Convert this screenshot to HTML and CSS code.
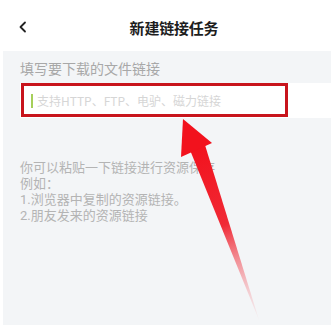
FILE: index.html
```html
<!DOCTYPE html>
<html lang="zh">
<head>
<meta charset="utf-8">
<link rel="stylesheet" href="styles.css">
</head>
<body>
<div class="page">
  <header class="topbar">
    <span class="back">
      <svg width="9" height="12" viewBox="0 0 9 12"><path d="M7 1.5 L2.5 6 L7 10.5" fill="none" stroke="#222" stroke-width="1.8" stroke-linecap="round" stroke-linejoin="round"/></svg>
    </span>
    <h1 class="title">新建链接任务</h1>
  </header>
  <main class="content">
    <div class="label">填写要下载的文件链接</div>
    <div class="field">
      <span class="cursor"></span>
      <span class="placeholder">支持HTTP、FTP、电驴、磁力链接</span>
      <div class="highlight"></div>
    </div>
    <div class="help">
      <p>你可以粘贴一下链接进行资源保存</p>
      <p>例如：</p>
      <p>1.浏览器中复制的资源链接。</p>
      <p>2.朋友发来的资源链接</p>
    </div>
  </main>
  <svg class="arrow" width="331" height="325" viewBox="0 0 331 325">
    <defs>
      <linearGradient id="fade" x1="196" y1="148" x2="258" y2="320" gradientUnits="userSpaceOnUse">
        <stop offset="0" stop-color="#f2121d"/>
        <stop offset="0.45" stop-color="#f02a36"/>
        <stop offset="1" stop-color="#f4c8cc" stop-opacity="0.2"/>
      </linearGradient>
    </defs>
    <polygon points="190,150 205,145 259,320" fill="url(#fade)"/>
    <polygon points="183,119 181,157 212,143" fill="#f2121d"/>
  </svg>
</div>
</body>
</html>
```
FILE: styles.css
```css
* { box-sizing: border-box; }
html, body { margin: 0; padding: 0; background: #fff; }
body {
  font-family: "Noto Sans CJK SC", "Noto Sans", sans-serif;
  width: 331px;
  height: 325px;
  overflow: hidden;
}
.page {
  position: relative;
  width: 331px;
  height: 325px;
  display: flex;
  flex-direction: column;
}
.topbar {
  height: 51px;
  flex: none;
  display: flex;
  align-items: center;
  justify-content: center;
  position: relative;
  background: #fff;
}
.back {
  position: absolute;
  left: 18px;
  top: 21px;
  display: flex;
}
.title {
  margin: 0 0 0 17px;
  font-size: 15px;
  font-weight: 700;
  color: #1d1d1d;
  letter-spacing: -0.2px;
  line-height: 20px;
  padding-top: 4px;
}
.content {
  flex: 1;
  margin-left: 3px;
  background: #f3f5f7;
  padding: 7px 0 0 17px;
}
.label {
  font-size: 14px;
  line-height: 20px;
  color: #a8a8a8;
}
.field {
  position: relative;
  margin-top: 5px;
  height: 35px;
  background: #fff;
  display: flex;
  align-items: center;
  padding-left: 11px;
}
.cursor {
  width: 2px;
  height: 14px;
  background: #a6cf5a;
  margin-right: 4px;
}
.placeholder {
  font-size: 12px;
  color: #d6d6d6;
}
.highlight {
  position: absolute;
  left: 1px;
  top: 0;
  width: 267px;
  height: 34px;
  border: 3px solid #c8141c;
}
.help {
  margin-top: 42px;
  font-family: Roboto, "Noto Sans CJK SC", sans-serif;
  font-size: 13px;
  line-height: 16px;
  color: #b4b4b4;
}
.help p { margin: 0; }
.arrow {
  position: absolute;
  left: 0;
  top: 0;
  pointer-events: none;
}
```
